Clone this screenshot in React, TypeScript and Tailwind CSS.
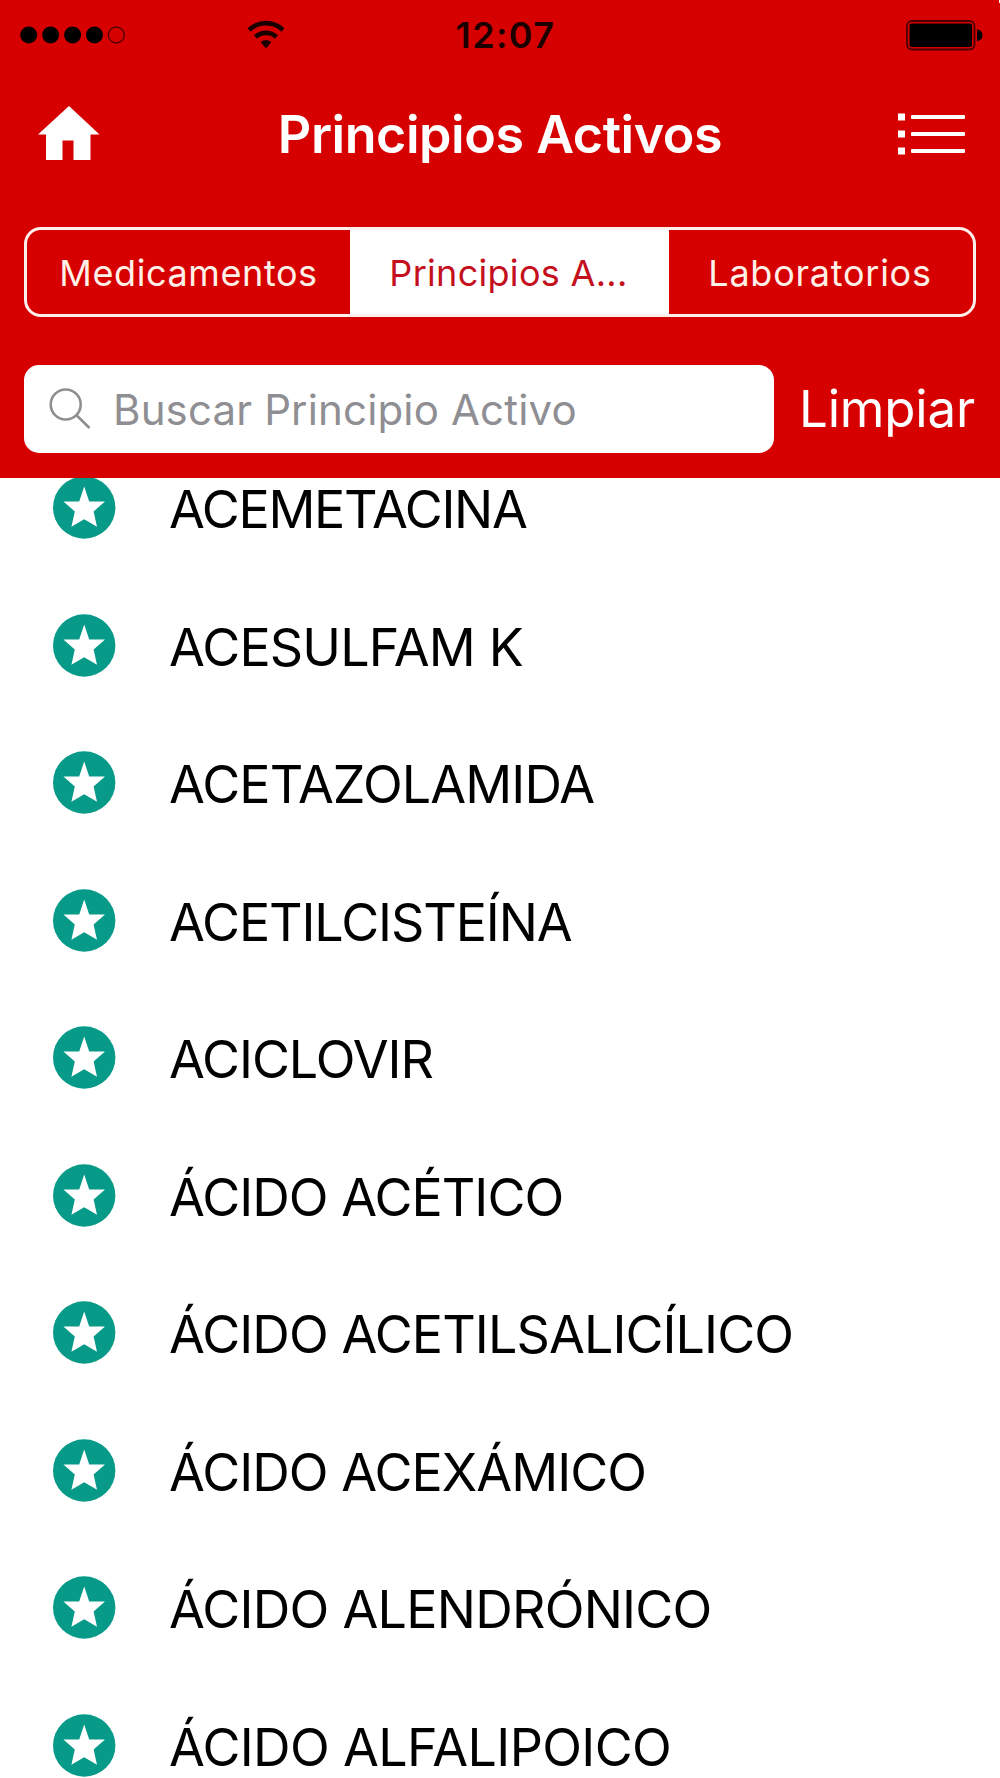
import { useState } from 'react';

const tabs = [
  { label: 'Medicamentos', title: 'Medicamentos', style: 'w-[323px] tracking-[0.6px]' },
  { label: 'Principios A...', title: 'Principios Activos', style: 'w-[319px] tracking-[0.3px] pr-[2px]' },
  { label: 'Laboratorios', title: 'Laboratorios', style: 'w-[304px] tracking-[0.75px] pr-[2px]' },
];

const items = [
  { name: 'ACEMETACINA', tracking: 'tracking-[-1.3px]' },
  { name: 'ACESULFAM K', tracking: 'tracking-[-0.85px]' },
  { name: 'ACETAZOLAMIDA', tracking: 'tracking-[-0.9px]' },
  { name: 'ACETILCISTEÍNA', tracking: 'tracking-[-1.1px]' },
  { name: 'ACICLOVIR', tracking: 'tracking-[-1.05px]' },
  { name: 'ÁCIDO ACÉTICO', tracking: 'tracking-[-0.95px]' },
  { name: 'ÁCIDO ACETILSALICÍLICO', tracking: 'tracking-[-0.9px]' },
  { name: 'ÁCIDO ACEXÁMICO', tracking: 'tracking-[-0.95px]' },
  { name: 'ÁCIDO ALENDRÓNICO', tracking: 'tracking-[-0.75px]' },
  { name: 'ÁCIDO ALFALIPOICO', tracking: 'tracking-[-0.65px]' },
];

const StatusBar = () => (
  <div className="grid grid-cols-[1fr_auto_1fr] items-center h-[70px] pl-5 pr-[17px] text-black">
    <div className="flex items-center">
      <svg className="w-[107px] h-[18px]" viewBox="0 0 107 18">
        <circle cx="8.7" cy="9" r="8.5" />
        <circle cx="30.6" cy="9" r="8.5" />
        <circle cx="52.6" cy="9" r="8.5" />
        <circle cx="74.5" cy="9" r="8.5" />
        <circle cx="96.3" cy="9" r="8" fill="none" stroke="#4a0000" strokeWidth="1.3" />
      </svg>
      <svg className="w-[38px] h-[29px] ml-[120px] -mt-[2px]" viewBox="0 0 38 29">
        <path d="M2 10 A24.5 24.5 0 0 1 36 10" fill="none" stroke="#1c0000" strokeWidth="4.6" />
        <path d="M8.5 17 A15.5 15.5 0 0 1 29.5 17" fill="none" stroke="#1c0000" strokeWidth="4.6" />
        <path d="M13.5 22 Q19 18 24.5 22 L19 28.5 Z" fill="#1c0000" />
      </svg>
    </div>
    <span className="pl-[8px] text-[36px] font-semibold leading-none tracking-[1.4px] text-[#1c0000]">12:07</span>
    <svg className="w-[77px] h-[31px] justify-self-end" viewBox="0 0 77 31">
      <rect x="1" y="1" width="67.5" height="28.5" rx="5" fill="none" stroke="#4a0000" strokeWidth="1.8" />
      <rect x="3.5" y="3.5" width="62.5" height="23.5" rx="2" />
      <path d="M71 9.5 Q76.5 10 76.5 15.3 Q76.5 20.5 71 21 Z" />
    </svg>
  </div>
);

const NavBar = ({ title }: { title: string }) => (
  <div className="grid grid-cols-[1fr_auto_1fr] items-center h-[130px] pl-[38px] pr-[35px]">
    <svg className="w-[62px] h-[54px] -mt-[4px]" viewBox="0 0 62 54" fill="white">
      <path d="M31 0 L61.5 28.5 H52.5 V54 H35.5 V34.5 H24.5 V54 H8 V28.5 H0 Z" />
    </svg>
    <h1 className="pr-[3px] text-[52px] font-semibold leading-none tracking-[-0.45px] text-white">{title}</h1>
    <svg className="w-[67px] h-[42px] -mt-[2px] justify-self-end" viewBox="0 0 67 42" fill="white">
      {[0, 17, 34].map((y) => (
        <g key={y}>
          <rect x="0" y={y + 0.5} width="7" height="7" />
          <rect x="13" y={y + 2} width="54" height="4" rx="1" />
        </g>
      ))}
    </svg>
  </div>
);

const StarBadge = () => (
  <svg className="w-[63px] h-[63px] shrink-0" viewBox="0 0 63 63">
    <circle cx="31.2" cy="31.5" r="31.2" fill="#079a88" />
    <path d="M31.2 10.5 L36.2 25.5 H52 L40.6 35.4 L44 50.8 L31.2 43.3 L18.4 50.8 L21.8 35.4 L10.4 25.5 H26.2 Z" fill="white" />
  </svg>
);

const App = () => {
  const [active, setActive] = useState(1);
  const [query, setQuery] = useState('');

  return (
    <div className="flex flex-col w-[1000px] h-[1778px] overflow-hidden bg-white font-['Inter',sans-serif]">
      <header className="relative z-10 shrink-0 h-[478px] bg-[#d70000]">
        <span className="absolute top-0 right-0 w-px h-[3px] bg-white" />
        <StatusBar />
        <NavBar title={tabs[active].title} />

        {/* Segmented control */}
        <div className="flex mt-[27px] ml-6 w-[952px] h-[90px] border-[3px] border-[#fff0ee] rounded-[17px] overflow-hidden">
          {tabs.map((tab, i) => (
            <button
              key={tab.label}
              onClick={() => setActive(i)}
              className={`${tab.style} h-full pt-[2px] text-[36px] leading-none whitespace-nowrap ${active === i ? 'bg-white text-[#c4101c]' : 'text-[#fff0e8]'}`}
            >
              {tab.label}
            </button>
          ))}
        </div>

        {/* Search */}
        <div className="flex items-center mt-12 ml-6">
          <label className="flex items-center w-[750px] h-[88px] pl-[25px] bg-white rounded-[15px]">
            <svg className="w-[42px] h-[42px] shrink-0" viewBox="0 0 42 42" fill="none" stroke="#8e8e93" strokeWidth="2.6">
              <circle cx="16.7" cy="16.5" r="15" />
              <path d="M27.5 27.3 L40.5 40" />
            </svg>
            <input
              value={query}
              onChange={(e) => setQuery(e.target.value)}
              placeholder="Buscar Principio Activo"
              className="flex-1 ml-[22px] h-[60px] text-[42px] tracking-[0.15px] outline-none placeholder:text-[#8e8e93]"
            />
          </label>
          <button onClick={() => setQuery('')} className="ml-[25px] -mt-[2px] text-[51px] leading-none tracking-[-0.2px] text-white">
            Limpiar
          </button>
        </div>
      </header>

      <ul className="-mt-[39px]">
        {items.map(({ name, tracking }) => (
          <li key={name} className="flex items-center h-[137.5px] pl-[53px]">
            <StarBadge />
            <span className={`ml-[53px] mt-[5px] text-[52px] leading-none whitespace-nowrap text-black ${tracking}`}>{name}</span>
          </li>
        ))}
      </ul>
    </div>
  );
};

export default App;
